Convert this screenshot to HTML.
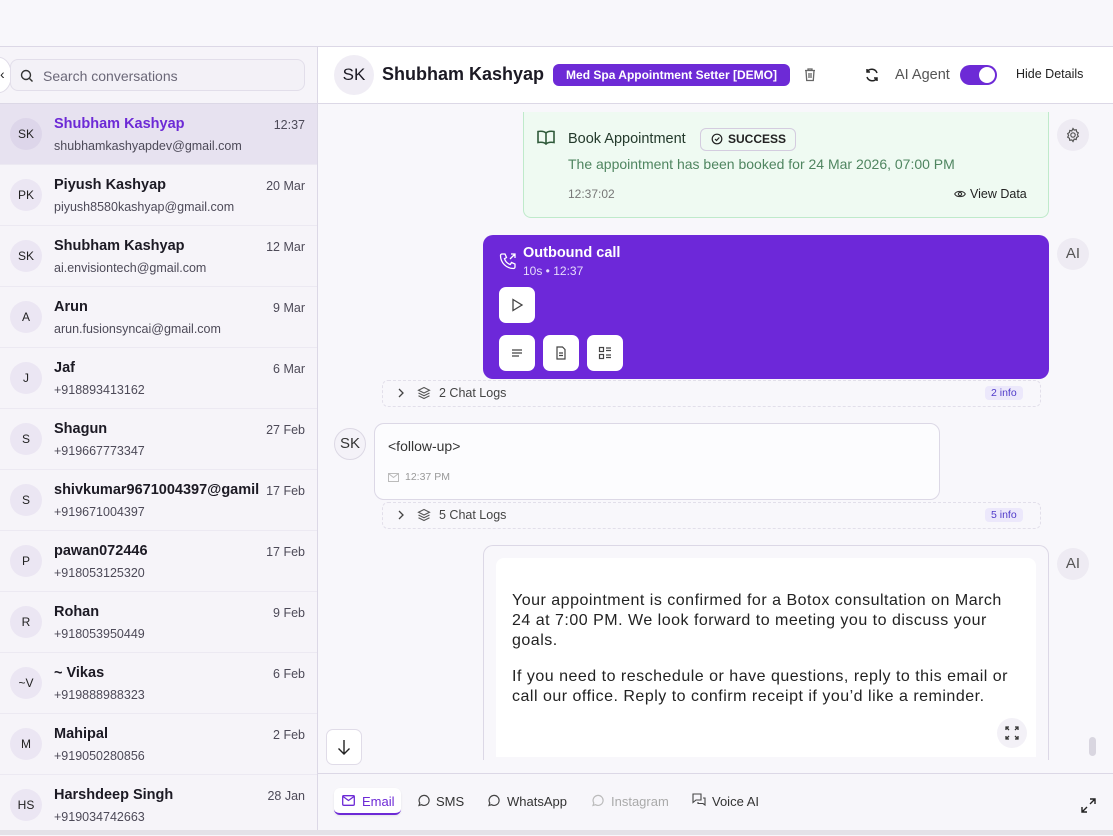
<!DOCTYPE html>
<html><head><style>
*{box-sizing:border-box;margin:0;padding:0}
body{width:1113px;height:835px;overflow:hidden;background:#f8f7fb;font-family:"Liberation Sans",sans-serif;color:#1c1a24;position:relative}
.a{position:absolute}
.top{left:0;top:0;width:1113px;height:47px;background:#f8f7fb;border-bottom:1px solid #dcd8e6}
.left{left:0;top:47px;width:318px;height:783px;background:#f6f4f9;border-right:1px solid #dcd8e6}
.search{left:10px;top:59px;width:295px;height:32px;border:1px solid #e2deea;border-radius:8px;background:#f3f1f7;font-size:14px;color:#6b6878;padding:8px 0 0 32px}
.item{left:0;width:317px;height:61px;border-bottom:1px solid #ece9f2}
.av{position:absolute;left:10px;top:14px;width:32px;height:32px;border-radius:50%;background:#ebe6f3;font-size:12px;text-align:center;line-height:32px;color:#222}
.nm{position:absolute;left:54px;top:12px;font-size:14.5px;font-weight:bold;white-space:nowrap}
.em{position:absolute;left:54px;top:35px;font-size:12.5px;color:#4d4a58}
.dt{position:absolute;right:12px;top:14px;font-size:12.5px;color:#4d4a58}
.hdr{left:318px;top:47px;width:795px;height:57px;background:#fff;border-bottom:1px solid #dcd8e6}
.btn{width:36px;height:36px;background:#fff;border-radius:7px;display:flex;align-items:center;justify-content:center}
</style></head><body>
<div class="a top"></div>
<div class="a left"></div>
<div class="a" style="left:-14px;top:57px;width:26px;height:36px;border-radius:50%;background:#fff;border:1px solid #e0dce8"></div>
<div class="a" style="left:0;top:66px;font-size:14px;color:#222">&#8249;</div>
<div class="a search">Search conversations</div>
<svg class="a" style="left:20px;top:69px" width="14" height="14" viewBox="0 0 14 14" fill="none" stroke="#333" stroke-width="1.4"><circle cx="6" cy="6" r="4.5"/><path d="M9.5 9.5l3 3"/></svg>
<div class="a" style="left:0;top:103px;width:317px;height:1px;background:#dcd8e6"></div>

<div class="a item" style="top:104px;background:#e7e2f0"><div class="av" style="background:#ddd6ea">SK</div><div class="nm" style="color:#6d2ad6">Shubham Kashyap</div><div class="em">shubhamkashyapdev@gmail.com</div><div class="dt">12:37</div></div>
<div class="a item" style="top:165px"><div class="av">PK</div><div class="nm">Piyush Kashyap</div><div class="em">piyush8580kashyap@gmail.com</div><div class="dt">20 Mar</div></div>
<div class="a item" style="top:226px"><div class="av">SK</div><div class="nm">Shubham Kashyap</div><div class="em">ai.envisiontech@gmail.com</div><div class="dt">12 Mar</div></div>
<div class="a item" style="top:287px"><div class="av">A</div><div class="nm">Arun</div><div class="em">arun.fusionsyncai@gmail.com</div><div class="dt">9 Mar</div></div>
<div class="a item" style="top:348px"><div class="av">J</div><div class="nm">Jaf</div><div class="em">+918893413162</div><div class="dt">6 Mar</div></div>
<div class="a item" style="top:409px"><div class="av">S</div><div class="nm">Shagun</div><div class="em">+919667773347</div><div class="dt">27 Feb</div></div>
<div class="a item" style="top:470px"><div class="av">S</div><div class="nm">shivkumar9671004397@gamil</div><div class="em">+919671004397</div><div class="dt">17 Feb</div></div>
<div class="a item" style="top:531px"><div class="av">P</div><div class="nm">pawan072446</div><div class="em">+918053125320</div><div class="dt">17 Feb</div></div>
<div class="a item" style="top:592px"><div class="av">R</div><div class="nm">Rohan</div><div class="em">+918053950449</div><div class="dt">9 Feb</div></div>
<div class="a item" style="top:653px"><div class="av">~V</div><div class="nm">~ Vikas</div><div class="em">+919888988323</div><div class="dt">6 Feb</div></div>
<div class="a item" style="top:714px"><div class="av">M</div><div class="nm">Mahipal</div><div class="em">+919050280856</div><div class="dt">2 Feb</div></div>
<div class="a item" style="top:775px;border:0"><div class="av">HS</div><div class="nm">Harshdeep Singh</div><div class="em">+919034742663</div><div class="dt">28 Jan</div></div>

<div class="a hdr"></div>
<div class="a" style="left:334px;top:55px;width:40px;height:40px;border-radius:50%;background:#f0edf5;text-align:center;line-height:40px;font-size:17px">SK</div>
<div class="a" style="left:382px;top:64px;font-size:18px;font-weight:bold">Shubham Kashyap</div>
<div class="a" style="left:553px;top:64px;width:237px;height:22px;border-radius:6px;background:#6d2ad6;color:#fff;font-size:12px;font-weight:bold;line-height:22px;text-align:center">Med Spa Appointment Setter [DEMO]</div>
<svg class="a" style="left:803px;top:67px" width="14" height="15" viewBox="0 0 14 15" fill="none" stroke="#666" stroke-width="1.3"><path d="M2 3.5h10M5 3.5V2h4v1.5M3 3.5l.7 10h6.6l.7-10M6 6v5M8 6v5"/></svg>
<svg class="a" style="left:864px;top:67px" width="16" height="16" viewBox="0 0 16 16" fill="none" stroke="#222" stroke-width="1.5"><path d="M13 6A5.5 5.5 0 0 0 3 5M3 2v3h3M3 10a5.5 5.5 0 0 0 10 1M13 14v-3h-3"/></svg>
<div class="a" style="left:895px;top:67px;font-size:14.5px;color:#555">AI Agent</div>
<div class="a" style="left:960px;top:65px;width:37px;height:20px;border-radius:10px;background:#6d2ad6"><div style="position:absolute;right:2px;top:2px;width:16px;height:16px;border-radius:50%;background:#fff"></div></div>
<div class="a" style="left:1016px;top:67px;font-size:12.5px;color:#222">Hide Details</div>

<div class="a" style="left:523px;top:112px;width:526px;height:106px;background:#effaf2;border:1px solid #bfeacb;border-top:0;border-radius:0 0 8px 8px"></div>
<svg class="a" style="left:536px;top:129px" width="20" height="18" viewBox="0 0 20 18" fill="none" stroke="#2f5a3a" stroke-width="1.6"><path d="M10 4C8 2 5 2 2 2.5v11c3-.5 6-.5 8 1.5 2-2 5-2 8-1.5v-11C15 2 12 2 10 4zM10 4v11"/></svg>
<div class="a" style="left:568px;top:131px;font-size:14.5px;color:#243a2c">Book Appointment</div>
<div class="a" style="left:700px;top:128px;width:96px;height:23px;border:1px solid #d4ccdf;border-radius:6px;font-size:12px;font-weight:bold;line-height:21px;padding-left:27px;color:#222">SUCCESS</div>
<svg class="a" style="left:711px;top:133px" width="12" height="12" viewBox="0 0 12 12" fill="none" stroke="#222" stroke-width="1.2"><circle cx="6" cy="6" r="4.8"/><path d="M4 6l1.5 1.5L8.3 4.5"/></svg>
<div class="a" style="left:568px;top:156px;font-size:14px;color:#4f8560">The appointment has been booked for 24 Mar 2026, 07:00 PM</div>
<div class="a" style="left:568px;top:187px;font-size:12px;color:#777">12:37:02</div>
<svg class="a" style="left:954px;top:189px" width="12" height="10" viewBox="0 0 12 10" fill="none" stroke="#333" stroke-width="1.1"><path d="M.7 5C2.5 1.5 9.5 1.5 11.3 5 9.5 8.5 2.5 8.5.7 5z"/><circle cx="6" cy="5" r="1.6"/></svg>
<div class="a" style="left:970px;top:187px;font-size:12.5px;color:#222">View Data</div>
<div class="a" style="left:1057px;top:119px;width:32px;height:32px;border-radius:50%;background:#eeebf3"></div>
<svg class="a" style="left:1065px;top:127px" width="16" height="16" viewBox="0 0 16 16" fill="none" stroke="#555" stroke-width="1.2"><circle cx="8" cy="8" r="2.2"/><path d="M8 1.5l1.2 1.6 2-.4.4 2 1.7 1.1-.9 1.8.9 1.8-1.7 1.1-.4 2-2-.4L8 14.5l-1.2-1.6-2 .4-.4-2-1.7-1.1.9-1.8-.9-1.8 1.7-1.1.4-2 2 .4z"/></svg>

<div class="a" style="left:483px;top:235px;width:566px;height:144px;background:#6d28d9;border-radius:10px"></div>
<svg class="a" style="left:499px;top:252px" width="18" height="18" viewBox="0 0 18 18" fill="none" stroke="#fff" stroke-width="1.3"><path d="M3 2h3l1.5 3.5-2 1.2a9 9 0 0 0 5.8 5.8l1.2-2L16 12v3a1.5 1.5 0 0 1-1.5 1.5A13 13 0 0 1 1.5 3.5 1.5 1.5 0 0 1 3 2zM11 7l5-5M12 2h4v4"/></svg>
<div class="a" style="left:523px;top:245px;font-size:14.5px;font-weight:bold;color:#fff">Outbound call</div>
<div class="a" style="left:523px;top:264px;font-size:12px;color:#e6dcfb">10s • 12:37</div>
<div class="a btn" style="left:499px;top:287px"><svg width="14" height="14" viewBox="0 0 14 14" fill="none" stroke="#444" stroke-width="1.3"><path d="M3 1.5l9 5.5-9 5.5z"/></svg></div>
<div class="a btn" style="left:499px;top:335px"><svg width="14" height="14" viewBox="0 0 14 14" stroke="#444" stroke-width="1.3"><path d="M2 4h10M2 7h10M2 10h7"/></svg></div>
<div class="a btn" style="left:543px;top:335px"><svg width="14" height="14" viewBox="0 0 14 14" fill="none" stroke="#444" stroke-width="1.2"><path d="M3 1h5.5L11 3.5V13H3zM5 7h4M5 9.5h4"/></svg></div>
<div class="a btn" style="left:587px;top:335px"><svg width="14" height="14" viewBox="0 0 14 14" fill="none" stroke="#444" stroke-width="1.2"><rect x="1.5" y="1.5" width="4" height="4"/><rect x="1.5" y="8.5" width="4" height="4"/><path d="M8 2h5M8 4.5h5M8 9h5M8 11.5h5"/></svg></div>
<div class="a" style="left:1057px;top:238px;width:32px;height:32px;border-radius:50%;background:#eeebf3;text-align:center;line-height:32px;font-size:15px;color:#555">AI</div>

<div class="a" style="left:382px;top:380px;width:659px;height:27px;border:1px dashed #e2dfea;border-radius:6px"></div>
<svg class="a" style="left:397px;top:388px" width="8" height="10" viewBox="0 0 8 10" fill="none" stroke="#444" stroke-width="1.3"><path d="M2 1l4 4-4 4"/></svg>
<svg class="a" style="left:417px;top:386px" width="14" height="14" viewBox="0 0 14 14" fill="none" stroke="#555" stroke-width="1.1"><path d="M7 1.5l5.5 2.8L7 7 1.5 4.3zM1.5 7L7 9.8 12.5 7M1.5 9.7L7 12.5l5.5-2.8"/></svg>
<div class="a" style="left:439px;top:386px;font-size:12.5px;color:#444">2 Chat Logs</div>
<div class="a" style="left:985px;top:386px;padding:1px 6px;border-radius:4px;background:#ece8fb;color:#4f3ac9;font-size:10.5px">2 info</div>

<div class="a" style="left:334px;top:428px;width:32px;height:32px;border-radius:50%;border:1px solid #dcd8e4;background:#f4f2f8;text-align:center;line-height:30px;font-size:15px;color:#333">SK</div>
<div class="a" style="left:374px;top:423px;width:566px;height:77px;background:#fcfcfe;border:1px solid #dcd8e6;border-radius:10px"></div>
<div class="a" style="left:388px;top:438px;font-size:14px;color:#333">&lt;follow-up&gt;</div>
<svg class="a" style="left:388px;top:473px" width="11" height="9" viewBox="0 0 11 9" fill="none" stroke="#bbb"><rect x=".5" y=".5" width="10" height="8"/><path d="M.5 .5l5 4 5-4"/></svg>
<div class="a" style="left:405px;top:471px;font-size:10.5px;color:#999">12:37 PM</div>

<div class="a" style="left:382px;top:502px;width:659px;height:27px;border:1px dashed #e2dfea;border-radius:6px"></div>
<svg class="a" style="left:397px;top:510px" width="8" height="10" viewBox="0 0 8 10" fill="none" stroke="#444" stroke-width="1.3"><path d="M2 1l4 4-4 4"/></svg>
<svg class="a" style="left:417px;top:508px" width="14" height="14" viewBox="0 0 14 14" fill="none" stroke="#555" stroke-width="1.1"><path d="M7 1.5l5.5 2.8L7 7 1.5 4.3zM1.5 7L7 9.8 12.5 7M1.5 9.7L7 12.5l5.5-2.8"/></svg>
<div class="a" style="left:439px;top:508px;font-size:12.5px;color:#444">5 Chat Logs</div>
<div class="a" style="left:985px;top:508px;padding:1px 6px;border-radius:4px;background:#ece8fb;color:#4f3ac9;font-size:10.5px">5 info</div>

<div class="a" style="left:483px;top:545px;width:566px;height:215px;background:#f8f7fb;border:1px solid #dcd8e6;border-bottom:0;border-radius:10px 10px 0 0"></div>
<div class="a" style="left:496px;top:558px;width:540px;height:199px;background:#fff;border-radius:8px 8px 0 0"></div>
<div class="a" style="left:512px;top:591px;font-size:16px;line-height:20px;color:#222;white-space:nowrap;letter-spacing:.5px">Your appointment is confirmed for a Botox consultation on March<br>24 at 7:00 PM. We look forward to meeting you to discuss your<br>goals.</div>
<div class="a" style="left:512px;top:667px;font-size:16px;line-height:20px;color:#222;white-space:nowrap;letter-spacing:.5px">If you need to reschedule or have questions, reply to this email or<br>call our office. Reply to confirm receipt if you’d like a reminder.</div>
<div class="a" style="left:997px;top:718px;width:30px;height:30px;border-radius:50%;background:#f3f1f7"></div>
<svg class="a" style="left:1005px;top:726px" width="14" height="14" viewBox="0 0 14 14" fill="none" stroke="#333" stroke-width="1.3"><path d="M1 4V1h3M10 1h3v3M13 10v3h-3M4 13H1v-3M1 1l3 3M13 1l-3 3M13 13l-3-3M1 13l3-3"/></svg>
<div class="a" style="left:1057px;top:548px;width:32px;height:32px;border-radius:50%;background:#eeebf3;text-align:center;line-height:32px;font-size:15px;color:#555">AI</div>
<div class="a" style="left:1089px;top:737px;width:7px;height:19px;border-radius:4px;background:#d9d6e0"></div>
<div class="a" style="left:326px;top:729px;width:36px;height:36px;border:1px solid #e0dce8;border-radius:7px;background:#fff"></div>
<svg class="a" style="left:337px;top:739px" width="14" height="16" viewBox="0 0 14 16" fill="none" stroke="#222" stroke-width="1.4"><path d="M7 1v14M1.5 9.5L7 15l5.5-5.5"/></svg>

<div class="a" style="left:318px;top:773px;width:795px;height:58px;background:#f7f6fa;border-top:1px solid #dcd8e6"></div>
<div class="a" style="left:334px;top:788px;width:67px;height:27px;background:#fff;border-radius:6px;border-bottom:2px solid #6d2ad6;box-shadow:0 1px 2px rgba(0,0,0,.08)"></div>
<svg class="a" style="left:342px;top:795px" width="13" height="11" viewBox="0 0 13 11" fill="none" stroke="#6d2ad6" stroke-width="1.3"><rect x=".7" y=".7" width="11.6" height="9.6" rx="1"/><path d="M1 1.5l5.5 4 5.5-4"/></svg>
<div class="a" style="left:362px;top:794px;font-size:13px;color:#6d2ad6">Email</div>
<svg class="a" style="left:417px;top:794px" width="13" height="13" viewBox="0 0 13 13" fill="none" stroke="#444" stroke-width="1.2"><path d="M2 11.5l.8-2.5A5 5 0 1 1 4.5 10.7z"/></svg>
<div class="a" style="left:436px;top:794px;font-size:13px;color:#333">SMS</div>
<svg class="a" style="left:487px;top:794px" width="13" height="13" viewBox="0 0 13 13" fill="none" stroke="#444" stroke-width="1.2"><path d="M2 11.5l.8-2.5A5 5 0 1 1 4.5 10.7z"/></svg>
<div class="a" style="left:507px;top:794px;font-size:13px;color:#333">WhatsApp</div>
<svg class="a" style="left:591px;top:794px" width="13" height="13" viewBox="0 0 13 13" fill="none" stroke="#bbb" stroke-width="1.2"><path d="M2 11.5l.8-2.5A5 5 0 1 1 4.5 10.7z"/></svg>
<div class="a" style="left:611px;top:794px;font-size:13px;color:#aaa">Instagram</div>
<svg class="a" style="left:692px;top:793px" width="14" height="14" viewBox="0 0 14 14" fill="none" stroke="#444" stroke-width="1.1"><path d="M1 1h8v6H4l-3 2.5zM11 5h2v7l-2-1.5H6V9"/></svg>
<div class="a" style="left:712px;top:794px;font-size:13px;color:#333">Voice AI</div>
<svg class="a" style="left:1081px;top:798px" width="15" height="15" viewBox="0 0 15 15" fill="none" stroke="#222" stroke-width="1.4"><path d="M9 1h5v5M14 1L9 6M6 14H1V9M1 14l5-5"/></svg>
<div class="a" style="left:0;top:830px;width:1113px;height:5px;background:#e4e2e8"></div>
</body></html>
